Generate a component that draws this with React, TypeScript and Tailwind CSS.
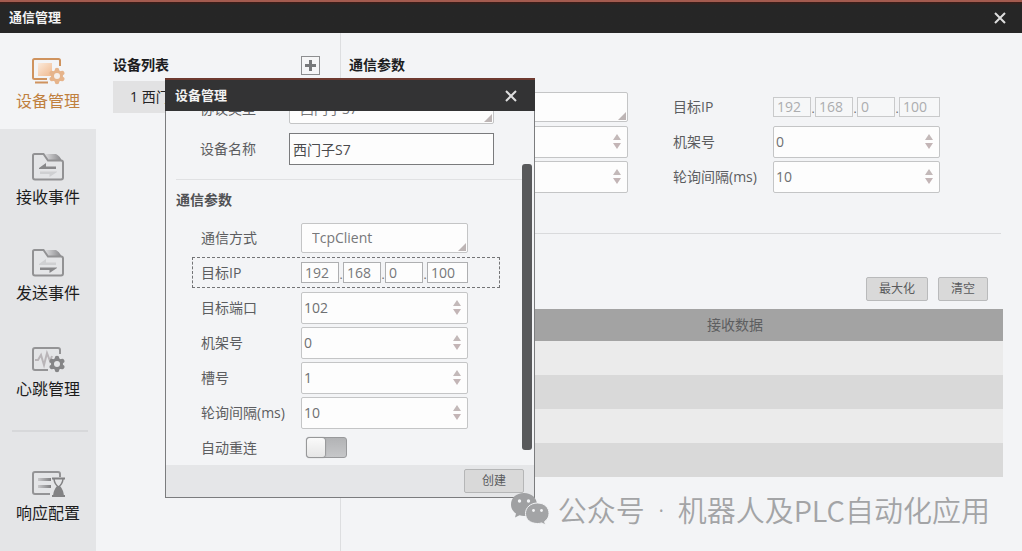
import { useId, type ReactNode } from "react";

function CloseIcon() {
  return (
    <svg width="12" height="12" viewBox="0 0 12 12" fill="none" stroke="#dedede" strokeWidth="2">
      <path d="M1 1l10 10M11 1L1 11" />
    </svg>
  );
}

function Gear({ color, hole }: { color: string; hole: string }) {
  return (
    <g transform="translate(26 19)">
      <circle r="6" fill={color} />
      <path
        d="M0 -6V6M-5.200 -3L5.200 3M-5.200 3L5.200 -3"
        stroke={color}
        strokeWidth="4.500"
        strokeLinecap="round"
      />
      <circle r="3" fill={hole} />
    </g>
  );
}

function DeviceIcon() {
  return (
    <svg width="34" height="28" viewBox="0 0 34 28" fill="none">
      <defs>
        <linearGradient id="deviceFill" x1="0" y1="0" x2="1" y2="1">
          <stop offset="0" stopColor="#fbeadb" />
          <stop offset="1" stopColor="#f0b98e" />
        </linearGradient>
      </defs>
      <rect x="7" y="6" width="14" height="13" fill="url(#deviceFill)" />
      <path d="M29 9V3.500Q29 2 27.500 2H3.500Q2 2 2 3.500V20.500Q2 22 3.500 22H16" stroke="#cf935e" strokeWidth="2" />
      <path d="M4 25.500H17" stroke="#cf935e" strokeWidth="2" />
      <Gear color="#e6b48b" hole="#f6efea" />
    </svg>
  );
}

function FolderIcon({ send = false }: { send?: boolean }) {
  const id = send ? "folderSend" : "folderReceive";
  return (
    <svg width="34" height="28" viewBox="0 0 34 28" fill="none">
      <defs>
        <linearGradient id={id} x1="0" y1="0" x2="1" y2="0">
          <stop offset="0" stopColor="#dcdcde" />
          <stop offset="1" stopColor="#858588" />
        </linearGradient>
      </defs>
      <path d="M14 1H25Q29 3 31 8H19Q16 6 14 1Z" fill={`url(#${id})`} />
      <path d="M3.500 1H12.500L17 7.500H30Q32 7.500 32 9.500V24.500Q32 26.500 30 26.500H4Q2 26.500 2 24.500V2.500Q2 1 3.500 1Z" stroke="#929294" strokeWidth="2" />
      <path d="M8 15L15 10V13.500H25V16H8Z" fill={send ? "#cfd0d2" : "#88888a"} />
      <path d="M26 19L18.500 24V21H9V18.500H26Z" fill={send ? "#88888a" : "#cfd0d2"} />
    </svg>
  );
}

function HeartbeatIcon() {
  return (
    <svg width="34" height="28" viewBox="0 0 34 28" fill="none">
      <path d="M29 9V5Q29 3 27 3H4Q2 3 2 5V23Q2 25 4 25H17" stroke="#949496" strokeWidth="2" />
      <path d="M4 15H7L10 10L13 20L16 8L19 16L21 11" stroke="#b9b5b8" strokeWidth="2" />
      <Gear color="#858587" hole="#e4e5e7" />
    </svg>
  );
}

function ResponseIcon() {
  return (
    <svg width="34" height="30" viewBox="0 0 34 30" fill="none">
      <defs>
        <linearGradient id="lines" x1="0" y1="0" x2="1" y2="0">
          <stop offset="0" stopColor="#c8c8ca" />
          <stop offset="1" stopColor="#808082" />
        </linearGradient>
      </defs>
      <path d="M29 8V5Q29 3 27 3H4Q2 3 2 5V23Q2 25 4 25H19" stroke="#949496" strokeWidth="2" />
      <rect x="7" y="9" width="13" height="3" fill="url(#lines)" />
      <rect x="7" y="16" width="13" height="3" fill="url(#lines)" />
      <path d="M22.500 9.500H32.500V11L28.500 18L32.500 27H22.500L26.500 18L22.500 11Z" fill="#e4e5e7" />
      <path d="M21 9.500H34M21 27H34" stroke="#828284" strokeWidth="2" />
      <path d="M23 10Q23.500 15 27.500 18Q31.500 15 32 10" stroke="#828284" strokeWidth="1.500" />
      <path d="M26 17H29Q32.500 21 33 27H22Q22.500 21 26 17Z" fill="#828284" />
    </svg>
  );
}

function WeChatIcon() {
  return (
    <svg width="40" height="34" viewBox="0 0 40 34">
      <path d="M14 1C6 1 1 6 1 12.500C1 16.500 3 19.500 6 21.500L5 25.500L9.500 23.200C11 23.700 12.500 24 14 24C21.500 24 27 19 27 12.500C27 6 21.500 1 14 1Z" fill="#9fa0a2" />
      <path d="M27.500 11C20.500 11 15.500 15.500 15.500 21.500C15.500 27.500 20.500 31.500 27.500 31.500C29 31.500 30.500 31.300 31.700 30.900L35.500 33L34.600 29.500C37.500 27.600 39 24.800 39 21.500C39 15.500 34.500 11 27.500 11Z" fill="#a3a4a6" stroke="#f3f4f6" strokeWidth="1" />
      <g fill="#f3f4f6">
        <circle cx="9.500" cy="9" r="1.700" />
        <circle cx="18.500" cy="9" r="1.700" />
        <circle cx="23.500" cy="18.500" r="1.400" />
        <circle cx="31.500" cy="18.500" r="1.400" />
      </g>
    </svg>
  );
}

function NavItem({ icon, label, active = false }: { icon: ReactNode; label: string; active?: boolean }) {
  return (
    <a
      href="#"
      aria-current={active ? "page" : undefined}
      className={
        active
          ? "flex h-24 flex-col items-center bg-[#f3f4f6] pt-6 text-[#c0803e]"
          : "flex h-24 flex-col items-center pt-6 text-[#1c1c1c]"
      }
    >
      <span className="flex h-8 items-start">{icon}</span>
      <span className="text-base leading-6">{label}</span>
    </a>
  );
}

function SelectBox({ id, value, wide = false }: { id: string; value: string; wide?: boolean }) {
  return (
    <div className={wide ? "relative w-[205px]" : "relative w-[167px]"}>
      <select
        id={id}
        defaultValue={value}
        className="block h-[30px] w-full appearance-none rounded-xs border border-[#c4c5c6] bg-[#fdfdfd] px-[10px] text-sm text-[#77787a]"
      >
        <option>{value}</option>
      </select>
      <svg className="pointer-events-none absolute right-[2px] bottom-[2px]" width="8" height="8" viewBox="0 0 8 8">
        <path d="M8 0V8H0Z" fill="#bdb5b5" />
      </svg>
    </div>
  );
}

function NumberBox({ id, value }: { id: string; value: string }) {
  return (
    <div className="flex h-8 w-[167px] items-center rounded-xs border border-[#c4c5c6] bg-[#fdfdfd] pr-[6px]">
      <input id={id} inputMode="numeric" defaultValue={value} className="min-w-0 flex-1 bg-transparent pl-[2px] text-sm text-[#6f7072] outline-none" />
      <div className="flex flex-col gap-[3px]">
        <button type="button" aria-label={"+"} className="block">
          <svg width="8" height="6" viewBox="0 0 8 6"><path d="M4 0L8 6H0Z" fill="#c3b9b9" /></svg>
        </button>
        <button type="button" aria-label={"-"} className="block">
          <svg width="8" height="6" viewBox="0 0 8 6"><path d="M0 0H8L4 6Z" fill="#c3b5b6" /></svg>
        </button>
      </div>
    </div>
  );
}

function IpBox({ id, disabled = false }: { id: string; disabled?: boolean }) {
  return (
    <div className="flex w-[167px] items-end text-xs leading-4 text-[#6c6c6e]">
      {["192", "168", "0", "100"].map((part, i) => (
        <div key={i} className="flex w-[42px] items-end last:w-auto last:flex-1">
          <input
            id={i === 0 ? id : undefined}
            aria-label={i === 0 ? undefined : `IP ${i + 1}`}
            defaultValue={part}
            disabled={disabled}
            className={
              disabled
                ? "h-5 w-[38px] min-w-0 grow border border-[#c9cacb] bg-[#f6f7f8] pl-[3px] text-sm leading-4 text-[#acadaf]"
                : "h-[21px] w-[38px] min-w-0 grow border border-[#aeafb1] bg-[#fdfdfd] pl-[3px] text-sm leading-4 text-[#77787a]"
            }
          />
          {i < 3 && <span className="w-1 text-center">.</span>}
        </div>
      ))}
    </div>
  );
}

type FieldKind = "select" | "number" | "ip";

function Field({ label, kind, value = "", disabled = false }: { label: string; kind: FieldKind; value?: string; disabled?: boolean }) {
  const id = useId();
  return (
    <div className="flex h-[35px] items-center">
      <label htmlFor={id} className="w-[100px] shrink-0 text-sm text-[#5c5d60]">{label}</label>
      {kind === "select" && <SelectBox id={id} value={value} />}
      {kind === "number" && <NumberBox id={id} value={value} />}
      {kind === "ip" && <IpBox id={id} disabled={disabled} />}
    </div>
  );
}

function DeviceDialog() {
  return (
    <section
      role="dialog"
      aria-labelledby="dialog-title"
      className="absolute top-[78px] left-[165px] flex w-[370px] flex-col border border-[#7b7c7e] bg-[#f3f4f6]"
    >
      <header className="-mx-px -mt-px flex h-[33px] shrink-0 items-center justify-between border-t-2 border-[#6e3a30] bg-[#333334] pr-[18px] pl-[10px]">
        <h2 id="dialog-title" className="text-[13px] font-bold text-[#f2f2f2]">设备管理</h2>
        <button type="button" aria-label="关闭"><CloseIcon /></button>
      </header>
      <div className="relative flex h-[354px] flex-col justify-end overflow-hidden">
        <div className="flex h-10 shrink-0 items-center pl-[34px]">
          <label htmlFor="protocol" className="w-[89px] text-sm text-[#5c5d60]">协议类型</label>
          <SelectBox id="protocol" value="西门子S7" wide />
        </div>
        <div className="flex h-10 shrink-0 items-center pl-[34px]">
          <label htmlFor="device-name" className="w-[89px] text-sm text-[#5c5d60]">设备名称</label>
          <input id="device-name" defaultValue="西门子S7" className="h-8 w-[205px] border border-[#7a7b7d] bg-[#fdfdfd] pl-[3px] text-sm text-[#4a4a4c]" />
        </div>
        <hr className="mt-[10px] mr-3 ml-[10px] shrink-0 border-[#e0e1e3]" />
        <h3 className="flex h-10 shrink-0 items-center pl-[10px] text-sm font-bold text-[#505154]">通信参数</h3>
        <div className="pl-[35px]"><Field label="通信方式" kind="select" value="TcpClient" /></div>
        <div className="relative pl-[35px]">
          <Field label="目标IP" kind="ip" />
          <div className="pointer-events-none absolute inset-y-[2px] right-[34px] left-[26px] border border-dashed border-[#737476]" />
        </div>
        <div className="pl-[35px]">
          <Field label="目标端口" kind="number" value="102" />
          <Field label="机架号" kind="number" value="0" />
          <Field label="槽号" kind="number" value="1" />
          <Field label="轮询间隔(ms)" kind="number" value="10" />
          <div className="flex h-[35px] items-center">
            <label htmlFor="reconnect" className="w-[105px] text-sm text-[#5c5d60]">自动重连</label>
            <input
              id="reconnect"
              type="checkbox"
              role="switch"
              className="h-[21px] w-[41px] appearance-none rounded-[3px] border border-[#98999b] bg-linear-to-b from-[#b2b3b5] to-[#c6c7c9] before:block before:h-full before:w-[18px] before:rounded-[3px] before:bg-linear-to-b before:from-[#fafafa] before:to-[#e6e6e6] before:shadow-[0_0_1px_1px_#97989a]"
            />
          </div>
        </div>
        <div className="absolute right-[2px] bottom-[15px] h-[286px] w-[10px] rounded-[3px] bg-[#58595b]" />
      </div>
      <footer className="flex h-8 items-center justify-end bg-[#e5e6e8] pr-[10px]">
        <button type="button" className="h-6 w-[60px] rounded-xs border border-[#b5b6b7] bg-[#d9d9d9] text-xs text-[#5a5b5d]">创建</button>
      </footer>
    </section>
  );
}

export default function App() {
  return (
    <div className="relative flex min-h-screen flex-col overflow-hidden bg-[#f3f4f6] font-['Open_Sans','Noto_Sans_CJK_SC',sans-serif]">
      <header className="flex h-[33px] items-center justify-between border-t-2 border-[#a35b4f] bg-linear-to-b from-[#3e1c18] from-0% to-[#262626] to-10% pr-4 pl-[9px]">
        <h1 className="text-[13px] font-bold text-[#f2f2f2]">通信管理</h1>
        <button type="button" aria-label="关闭"><CloseIcon /></button>
      </header>
      <div className="flex flex-1">
        <nav className="w-24 shrink-0 bg-[#e4e5e7]">
          <NavItem icon={<DeviceIcon />} label="设备管理" active />
          <NavItem icon={<FolderIcon />} label="接收事件" />
          <NavItem icon={<FolderIcon send />} label="发送事件" />
          <NavItem icon={<HeartbeatIcon />} label="心跳管理" />
          <hr className="mr-2 ml-3 my-[13px] border-t-2 border-[#d7d8da]" />
          <NavItem icon={<ResponseIcon />} label="响应配置" />
        </nav>
        <aside className="w-[245px] shrink-0 border-r border-[#dddee0] py-4 pr-5 pl-[17px]">
          <div className="flex h-8 items-center justify-between">
            <h2 className="text-sm font-bold text-[#1d1d1f]">设备列表</h2>
            <button type="button" aria-label="添加" className="flex size-[19px] items-center justify-center border border-[#8d8e90] bg-[#f6f6f7]">
              <svg width="11" height="11" viewBox="0 0 11 11" stroke="#77787a" strokeWidth="3"><path d="M5.500 0V11M0 5.500H11" /></svg>
            </button>
          </div>
          <ul>
            <li className="flex h-8 items-center bg-[#e2e2e3] pl-[17px] text-sm text-[#232325]">1 西门子S7</li>
          </ul>
        </aside>
        <main className="min-w-0 flex-1 py-4 pr-[19px] pl-2">
          <h2 className="flex h-8 items-center text-sm font-bold text-[#1d1d1f]">通信参数</h2>
          <div className="mt-2 flex gap-[45px] pl-3">
            <div>
              <Field label="通信方式" kind="select" value="TcpClient" />
              <Field label="目标端口" kind="number" value="102" />
              <Field label="槽号" kind="number" value="1" />
            </div>
            <div>
              <Field label="目标IP" kind="ip" disabled />
              <Field label="机架号" kind="number" value="0" />
              <Field label="轮询间隔(ms)" kind="number" value="10" />
            </div>
          </div>
          <hr className="mt-[39px] mr-[2px] border-[#d9dadc]" />
          <div className="mt-[43px] mr-[15px] flex justify-end gap-[10px] text-xs text-[#5a5b5d]">
            <button type="button" className="h-6 w-[62px] rounded-xs border border-[#b9babb] bg-[#d9d9d9]">最大化</button>
            <button type="button" className="h-6 w-[50px] rounded-xs border border-[#b9babb] bg-[#d9d9d9]">清空</button>
          </div>
          <table className="mt-2 w-full table-fixed border-collapse">
            <thead>
              <tr className="h-8 bg-[#a3a3a3]">
                <th className="w-[118px]" />
                <th className="p-0 text-sm font-normal text-[#5d5e60]">接收数据</th>
              </tr>
            </thead>
            <tbody>
              {[0, 1, 2, 3].map((row) => (
                <tr key={row} className="h-[34px] odd:bg-[#ebebeb] even:bg-[#d9d9d9]">
                  <td />
                  <td />
                </tr>
              ))}
            </tbody>
          </table>
        </main>
      </div>
      <DeviceDialog />
      <div className="pointer-events-none absolute right-8 bottom-[22px] flex items-center gap-2 text-[#a3a4a6]">
        <WeChatIcon />
        <p className="flex font-['Noto_Sans_CJK_SC',sans-serif] text-[29px] leading-10 font-[350] whitespace-nowrap">
          <span>公众号</span>
          <span className="mx-[13px] font-['Open_Sans',sans-serif]">·</span>
          <span>机器人及PLC自动化应用</span>
        </p>
      </div>
    </div>
  );
}
